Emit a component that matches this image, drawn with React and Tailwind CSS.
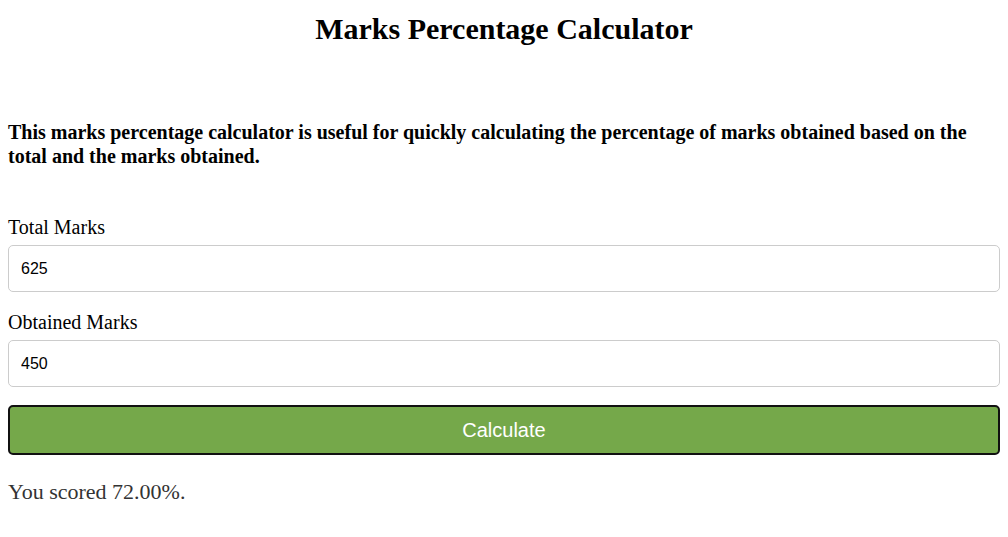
export default function App() {
  return (
    <div className="min-h-screen bg-white px-2 text-black" style={{ fontFamily: '"Liberation Serif", "Times New Roman", serif' }}>
      <h1 className="pt-[14px] text-center text-[30px] font-bold leading-none">
        Marks Percentage Calculator
      </h1>
      <p className="mt-[76px] text-[20px] font-bold leading-[24px]">
        This marks percentage calculator is useful for quickly calculating the percentage of marks obtained based on the
        total and the marks obtained.
      </p>
      <form className="mt-[47px] flex flex-col" onSubmit={(e) => e.preventDefault()}>
        <label className="text-[20px] leading-[24px]">Total Marks</label>
        <input
          type="text"
          defaultValue="625"
          className="mt-[6px] h-[47px] w-full rounded-[5px] border border-[#cccccc] px-3 text-[16px] text-black outline-none"
          style={{ fontFamily: '"Liberation Sans", Arial, sans-serif' }}
        />
        <label className="mt-[18px] text-[20px] leading-[24px]">Obtained Marks</label>
        <input
          type="text"
          defaultValue="450"
          className="mt-[6px] h-[47px] w-full rounded-[5px] border border-[#cccccc] px-3 text-[16px] text-black outline-none"
          style={{ fontFamily: '"Liberation Sans", Arial, sans-serif' }}
        />
        <button
          type="submit"
          className="mt-[18px] h-[50px] w-full rounded-[5px] border-2 border-[#111111] bg-[#75a84a] text-[20px] text-white"
          style={{ fontFamily: '"Liberation Sans", Arial, sans-serif' }}
        >
          Calculate
        </button>
      </form>
      <p className="mt-[24px] text-[22px] leading-[26px] text-[#333333]">You scored 72.00%.</p>
    </div>
  );
}
